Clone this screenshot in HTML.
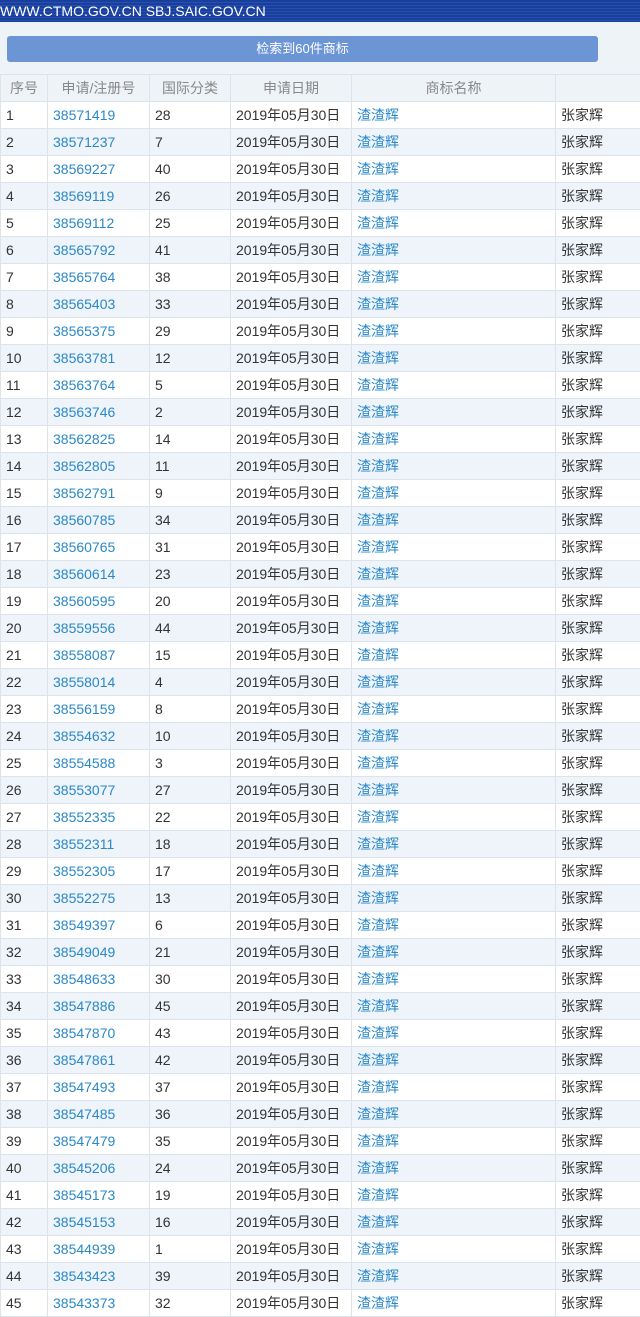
<!DOCTYPE html>
<html><head><meta charset="utf-8"><style>
body{margin:0;width:640px;height:1317px;overflow:hidden;background:#eef3f8;font-family:"Liberation Sans","Noto Sans CJK SC",sans-serif;}
.top{height:22px;background:repeating-linear-gradient(#1a3e9c 0,#1a3e9c 2px,#2550b0 2px,#2550b0 3px);color:#fff;font-size:14px;line-height:22px;padding-left:0;}
.btn{position:absolute;left:7px;top:36px;width:591px;height:26px;background:#6c95d6;border-radius:3px;color:#fff;font-size:13px;text-align:center;line-height:26px;}
table{position:absolute;top:74px;left:0;border-collapse:collapse;width:640px;table-layout:fixed;font-size:14px;color:#333;}
td,th{border:1px solid #dde3ea;height:26px;padding:0 0 0 5px;text-align:left;white-space:nowrap;overflow:hidden;}
th{background:#eef3f8;color:#888;font-weight:normal;text-align:center;padding:0;font-size:14px;}
tr.o td{background:#fff}tr.e td{background:#eef4fa}
a{color:#2a88c8;text-decoration:none}
</style></head><body>
<div class="top">WWW.CTMO.GOV.CN SBJ.SAIC.GOV.CN</div>
<div class="btn">检索到60件商标</div>
<table>
<colgroup><col style="width:47px"><col style="width:102px"><col style="width:81px"><col style="width:121px"><col style="width:204px"><col style="width:85px"></colgroup>
<tr><th>序号</th><th>申请/注册号</th><th>国际分类</th><th>申请日期</th><th>商标名称</th><th></th></tr>
<tbody id="b"></tbody>
</table>
<script>
var d=[[38571419,28],[38571237,7],[38569227,40],[38569119,26],[38569112,25],[38565792,41],[38565764,38],[38565403,33],[38565375,29],[38563781,12],[38563764,5],[38563746,2],[38562825,14],[38562805,11],[38562791,9],[38560785,34],[38560765,31],[38560614,23],[38560595,20],[38559556,44],[38558087,15],[38558014,4],[38556159,8],[38554632,10],[38554588,3],[38553077,27],[38552335,22],[38552311,18],[38552305,17],[38552275,13],[38549397,6],[38549049,21],[38548633,30],[38547886,45],[38547870,43],[38547861,42],[38547493,37],[38547485,36],[38547479,35],[38545206,24],[38545173,19],[38545153,16],[38544939,1],[38543423,39],[38543373,32]];
var h='';d.forEach(function(r,i){h+='<tr class="'+(i%2?'e':'o')+'"><td>'+(i+1)+'</td><td><a>'+r[0]+'</a></td><td>'+r[1]+'</td><td>2019年05月30日</td><td><a>渣渣辉</a></td><td>张家辉</td></tr>';});
document.getElementById('b').innerHTML=h;
</script>
</body></html>
